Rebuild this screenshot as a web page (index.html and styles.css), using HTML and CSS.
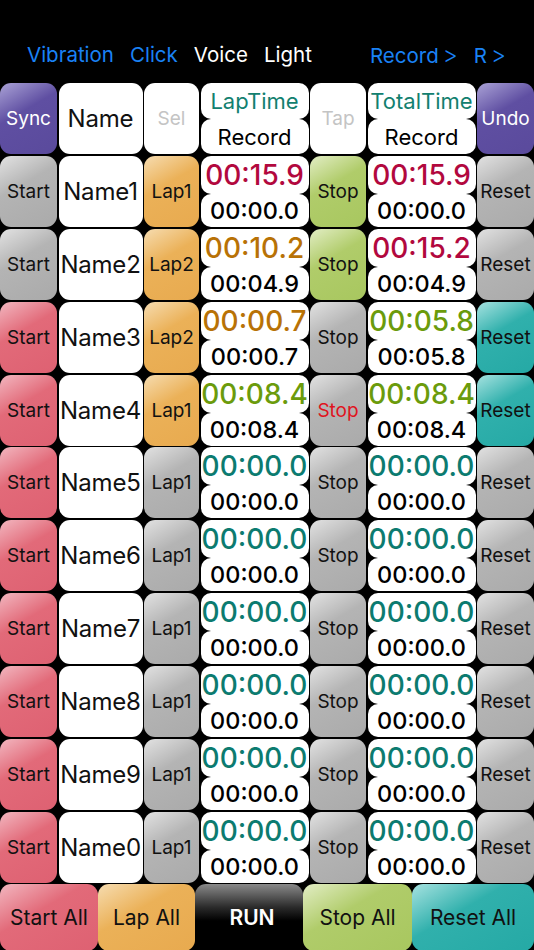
FILE: index.html
```html
<!DOCTYPE html>
<html lang="en">

<head>
    <meta charset="UTF-8">
    <meta name="viewport" content="width=device-width, initial-scale=1.0">
    <title>Multi Stopwatch</title>
    <link rel="stylesheet" href="styles.css">
</head>

<body>
    <div class="top-bar">
        <div class="top-left">
            <span class="opt on">Vibration</span>
            <span class="opt on">Click</span>
            <span class="opt">Voice</span>
            <span class="opt">Light</span>
        </div>
        <div class="top-right">
            <span class="opt on">Record<span class="arrow">&gt;</span></span>
            <span class="opt on">R<span class="arrow">&gt;</span></span>
        </div>
    </div>

    <div class="board">
        <!-- header row -->
        <div class="btn purple">Sync</div>
        <div class="cell name head-name">Name</div>
        <div class="cell faint">Sel</div>
        <div class="time head">
            <div class="t-top teal-head">LapTime</div>
            <div class="t-bot">Record</div>
        </div>
        <div class="cell faint">Tap</div>
        <div class="time head">
            <div class="t-top teal-head">TotalTime</div>
            <div class="t-bot">Record</div>
        </div>
        <div class="btn purple">Undo</div>

        <!-- Name1 -->
        <div class="btn gray">Start</div>
        <div class="cell name">Name1</div>
        <div class="btn orange">Lap1</div>
        <div class="time">
            <div class="t-top c-red">00:15.9</div>
            <div class="t-bot">00:00.0</div>
        </div>
        <div class="btn green">Stop</div>
        <div class="time">
            <div class="t-top c-red">00:15.9</div>
            <div class="t-bot">00:00.0</div>
        </div>
        <div class="btn gray">Reset</div>

        <!-- Name2 -->
        <div class="btn gray">Start</div>
        <div class="cell name">Name2</div>
        <div class="btn orange">Lap2</div>
        <div class="time">
            <div class="t-top c-orange">00:10.2</div>
            <div class="t-bot">00:04.9</div>
        </div>
        <div class="btn green">Stop</div>
        <div class="time">
            <div class="t-top c-red">00:15.2</div>
            <div class="t-bot">00:04.9</div>
        </div>
        <div class="btn gray">Reset</div>

        <!-- Name3 -->
        <div class="btn red">Start</div>
        <div class="cell name">Name3</div>
        <div class="btn orange">Lap2</div>
        <div class="time">
            <div class="t-top c-orange">00:00.7</div>
            <div class="t-bot">00:00.7</div>
        </div>
        <div class="btn gray">Stop</div>
        <div class="time">
            <div class="t-top c-green">00:05.8</div>
            <div class="t-bot">00:05.8</div>
        </div>
        <div class="btn teal">Reset</div>

        <!-- Name4 -->
        <div class="btn red">Start</div>
        <div class="cell name">Name4</div>
        <div class="btn orange">Lap1</div>
        <div class="time">
            <div class="t-top c-green">00:08.4</div>
            <div class="t-bot">00:08.4</div>
        </div>
        <div class="btn gray stop-red">Stop</div>
        <div class="time">
            <div class="t-top c-green">00:08.4</div>
            <div class="t-bot">00:08.4</div>
        </div>
        <div class="btn teal">Reset</div>

        <!-- Name5 -->
        <div class="btn red">Start</div>
        <div class="cell name">Name5</div>
        <div class="btn gray">Lap1</div>
        <div class="time">
            <div class="t-top c-teal">00:00.0</div>
            <div class="t-bot">00:00.0</div>
        </div>
        <div class="btn gray">Stop</div>
        <div class="time">
            <div class="t-top c-teal">00:00.0</div>
            <div class="t-bot">00:00.0</div>
        </div>
        <div class="btn gray">Reset</div>

        <!-- Name6 -->
        <div class="btn red">Start</div>
        <div class="cell name">Name6</div>
        <div class="btn gray">Lap1</div>
        <div class="time">
            <div class="t-top c-teal">00:00.0</div>
            <div class="t-bot">00:00.0</div>
        </div>
        <div class="btn gray">Stop</div>
        <div class="time">
            <div class="t-top c-teal">00:00.0</div>
            <div class="t-bot">00:00.0</div>
        </div>
        <div class="btn gray">Reset</div>

        <!-- Name7 -->
        <div class="btn red">Start</div>
        <div class="cell name">Name7</div>
        <div class="btn gray">Lap1</div>
        <div class="time">
            <div class="t-top c-teal">00:00.0</div>
            <div class="t-bot">00:00.0</div>
        </div>
        <div class="btn gray">Stop</div>
        <div class="time">
            <div class="t-top c-teal">00:00.0</div>
            <div class="t-bot">00:00.0</div>
        </div>
        <div class="btn gray">Reset</div>

        <!-- Name8 -->
        <div class="btn red">Start</div>
        <div class="cell name">Name8</div>
        <div class="btn gray">Lap1</div>
        <div class="time">
            <div class="t-top c-teal">00:00.0</div>
            <div class="t-bot">00:00.0</div>
        </div>
        <div class="btn gray">Stop</div>
        <div class="time">
            <div class="t-top c-teal">00:00.0</div>
            <div class="t-bot">00:00.0</div>
        </div>
        <div class="btn gray">Reset</div>

        <!-- Name9 -->
        <div class="btn red">Start</div>
        <div class="cell name">Name9</div>
        <div class="btn gray">Lap1</div>
        <div class="time">
            <div class="t-top c-teal">00:00.0</div>
            <div class="t-bot">00:00.0</div>
        </div>
        <div class="btn gray">Stop</div>
        <div class="time">
            <div class="t-top c-teal">00:00.0</div>
            <div class="t-bot">00:00.0</div>
        </div>
        <div class="btn gray">Reset</div>

        <!-- Name0 -->
        <div class="btn red">Start</div>
        <div class="cell name">Name0</div>
        <div class="btn gray">Lap1</div>
        <div class="time">
            <div class="t-top c-teal">00:00.0</div>
            <div class="t-bot">00:00.0</div>
        </div>
        <div class="btn gray">Stop</div>
        <div class="time">
            <div class="t-top c-teal">00:00.0</div>
            <div class="t-bot">00:00.0</div>
        </div>
        <div class="btn gray">Reset</div>
    </div>

    <div class="bottom-bar">
        <div class="btn red all-start">Start All</div>
        <div class="btn orange all-lap">Lap All</div>
        <div class="btn run">RUN</div>
        <div class="btn green all-stop">Stop All</div>
        <div class="btn teal all-reset">Reset All</div>
    </div>
</body>

</html>
```

FILE: styles.css
```css
body {
    margin: 0;
    background-color: #000;
    font-family: Inter, "Noto Sans", "Liberation Sans", sans-serif;
    width: 534px;
    height: 950px;
    overflow: hidden;
}

/* top option bar */
.top-bar {
    height: 83px;
    box-sizing: border-box;
    padding-top: 41px;
    display: flex;
    font-size: 20.5px;
    line-height: 28px;
}

.top-left {
    display: flex;
    gap: 16px;
    margin-left: 27px;
}

.top-right {
    display: flex;
    gap: 16px;
    margin-left: auto;
    margin-right: 28px;
}

.opt {
    color: #fff;
}

.opt.on {
    color: #1a82f5;
}

.arrow {
    margin-left: 4px;
    font-size: 23px;
    font-weight: 300;
}

/* main grid */
.board {
    display: grid;
    grid-template-columns: 57px 84px 55px 108px 56px 108px 57px;
    grid-template-rows: repeat(11, 71px);
    column-gap: 1.5px;
    row-gap: 1.9px;
}

.btn {
    display: flex;
    align-items: center;
    justify-content: center;
    border-radius: 11px;
    font-size: 19px;
    color: #111;
    white-space: nowrap;
    overflow: hidden;
}

.gray {
    background: linear-gradient(150deg, #e2e2e2 0%, #b4b4b4 40%, #aaaaaa 100%);
}

.red {
    background: linear-gradient(150deg, #f2b6bf 0%, #e26a79 40%, #de6172 100%);
}

.orange {
    background: linear-gradient(150deg, #f6dcb0 0%, #ebb158 40%, #e8aa4f 100%);
}

.green {
    background: linear-gradient(150deg, #e2edc4 0%, #b0cc6a 40%, #a8c75f 100%);
}

.teal {
    background: linear-gradient(150deg, #a6e2e0 0%, #30b0ac 40%, #25a9a5 100%);
}

.purple {
    background: linear-gradient(150deg, #aaa2d6 0%, #5f4fa2 40%, #5a4a9c 100%);
    color: #fff;
}

.stop-red {
    color: #e0141e;
}

.cell {
    display: flex;
    align-items: center;
    justify-content: center;
    background-color: #fff;
    border-radius: 11px;
    white-space: nowrap;
}

.name {
    font-size: 24px;
    color: #111;
    letter-spacing: -0.2px;
}

.head-name {
    font-size: 24px;
}

.faint {
    color: #c4c4c4;
    font-size: 19px;
}

/* stacked time cell */
.time {
    display: flex;
    flex-direction: column;
}

.t-top,
.t-bot {
    display: flex;
    align-items: center;
    justify-content: center;
    background-color: #fff;
    border-radius: 10px;
    white-space: nowrap;
}

.t-top {
    height: 38px;
    font-size: 28px;
    font-weight: 500;
}

.t-bot {
    flex: 1;
    font-size: 23.5px;
    font-weight: 500;
    color: #000;
}

.head .t-top {
    height: 36px;
    font-size: 22px;
    font-weight: 400;
}

.head .t-bot {
    font-size: 22px;
    font-weight: 400;
}

.teal-head {
    color: #12806f;
}

.c-red {
    color: #b2083e;
}

.c-orange {
    color: #b87206;
}

.c-green {
    color: #6b9b0c;
}

.c-teal {
    color: #0c7b70;
}

/* bottom action bar */
.bottom-bar {
    display: flex;
    height: 67px;
    margin-top: 1px;
}

.bottom-bar .btn {
    font-size: 21px;
    border-radius: 11px;
}

.all-start {
    width: 98px;
}

.all-lap {
    width: 97px;
}

.run {
    width: 108px;
    background: linear-gradient(180deg, #8a8a8a 0%, #2a2a2a 35%, #000 55%);
    color: #fff;
    font-size: 29px;
    font-weight: 600;
    padding-left: 6px;
    box-sizing: border-box;
}

.all-stop {
    width: 109px;
}

.all-reset {
    flex: 1;
}
```
